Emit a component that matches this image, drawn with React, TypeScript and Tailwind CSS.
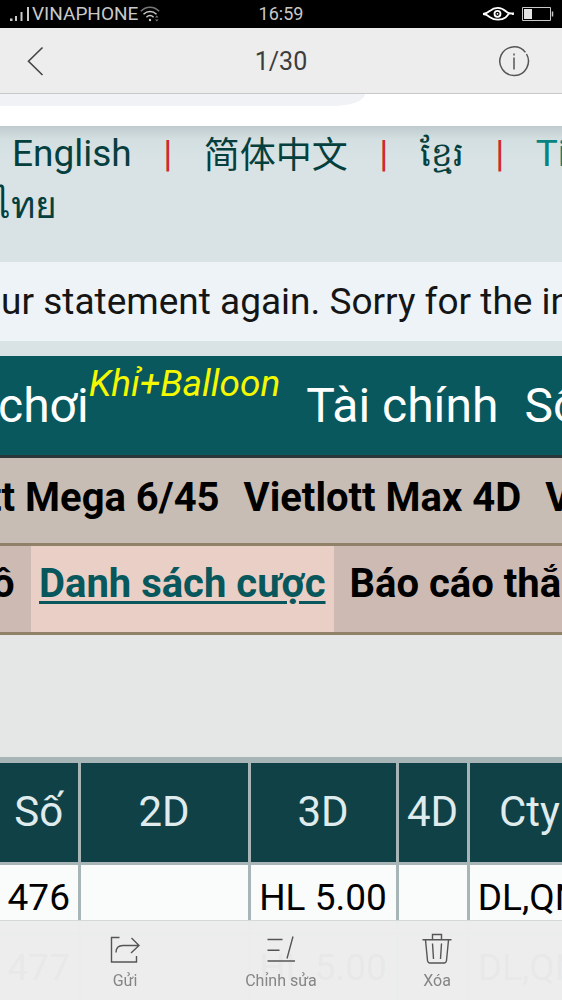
import type { ReactNode } from 'react'

const languages = [
  { label: 'English', className: 'text-[37px] text-[#053f3e]' },
  { label: '简体中文', className: 'pt-0.5 text-4xl leading-[52px] text-[#053f3e]' },
  { label: 'ខ្មែរ', className: 'text-[34px] text-[#053f3e]' },
  { label: 'Tiếng Việt', className: 'text-[37px] text-[#078380]' },
]

const columns = [
  { label: 'Số', width: 'w-[79px]' },
  { label: '2D', width: 'w-[170px]' },
  { label: '3D', width: 'w-[148px]' },
  { label: '4D', width: 'w-[71px]' },
  { label: 'Cty', width: 'w-[123px]' },
]

const rows = [
  ['476', '', 'HL 5.00', '', 'DL,QN'],
  ['477', '', 'HL 5.00', '', 'DL,QN'],
]

const StatusBar = () => (
  <div className="grid h-7 shrink-0 grid-cols-3 items-center bg-black px-2 text-lg leading-7 text-[#c9c9c9]">
    <div className="flex items-center">
      <svg width="22" height="16" viewBox="0 0 22 16" fill="#c9c9c9" aria-hidden="true">
        <path d="M2 12.500h2.500V15H2zM7 10h2v5H7zM12.500 6h2v9h-2zM19 1h2v14h-2z" />
      </svg>
      <span className="ml-0.5 text-[19px]">VINAPHONE</span>
      <svg className="ml-0.5" width="20" height="16" viewBox="0 0 20 16" fill="none" stroke="#c9c9c9" strokeWidth="1.500" aria-hidden="true">
        <path d="M.8 5.200C6-.2 14-.2 19.200 5.200" stroke="#777" />
        <path d="M3.500 8.200c3.800-3.600 9.200-3.600 13 0M6.400 11.200c2.200-2 5-2 7.200 0" />
        <circle cx="10" cy="14" r="1.200" fill="#c9c9c9" stroke="none" />
        <path d="M15 11.500l1.800-2 1.800 2zM15 13.500l1.800 2 1.800-2z" fill="#777" stroke="none" />
      </svg>
    </div>
    <span className="text-center">16:59</span>
    <div className="flex items-center justify-end gap-2">
      <svg width="32" height="16" viewBox="0 0 32 16" fill="none" stroke="#fff" aria-hidden="true">
        <path d="M1 8C4 7.800 6 6.500 8 4.800 12.500.8 19 .8 23.500 5 25.500 7 28 8 31 7.300v1.600" strokeWidth="1.800" />
        <path d="M1 8c3 .2 5 1.500 7 3.200 4.500 3.200 11.500 3.200 15.500.3 1.600-1.400 2.500-2.600 3.500-4" strokeWidth="1.800" />
        <circle cx="15.500" cy="7.800" r="3" strokeWidth="1.800" />
        <circle cx="15.500" cy="7.800" r=".9" fill="#fff" stroke="none" />
      </svg>
      <svg width="32" height="14" viewBox="0 0 32 14" fill="none" aria-hidden="true">
        <path d="M.5.500h28v13H.5z" stroke="#c9c9c9" />
        <path d="M2 2h8v10H2z" fill="#e5e5e5" />
        <path d="M30.500 4.500v5" stroke="#c9c9c9" strokeWidth="1.500" />
      </svg>
    </div>
  </div>
)

const PhotoHeader = () => (
  <header className="grid h-[66px] shrink-0 grid-cols-3 items-center border-b border-[#c8c8c8] bg-[#ededed] px-6 text-[#3c3c3c]">
    <button type="button" aria-label="Quay lại" className="justify-self-start">
      <svg width="24" height="32" viewBox="0 0 24 32" fill="none" stroke="#444" strokeWidth="1.600">
        <path d="M18.500 2.500L4.500 16.300l14 13.700" />
      </svg>
    </button>
    <h1 className="pt-0.5 text-center text-[25px] leading-8">1/30</h1>
    <button type="button" aria-label="Thông tin" className="mr-2 justify-self-end">
      <svg width="32" height="32" viewBox="0 0 32 32" fill="none" stroke="#555" strokeWidth="1.500">
        <path d="M27.420 7.390A14.300 14.300 0 1 0 28.500 9" />
        <path d="M16 12.500v12M16 8.500v2" />
      </svg>
    </button>
  </header>
)

const LanguageBar = () => (
  <nav className="h-[136px] shrink-0 bg-[#d9e3e5] bg-linear-to-b from-[#bfcbce] via-[#d3dfe1] via-10% to-[#d9e3e5] to-25% pt-0.5 text-[37px] leading-[52px]">
    <div className="flex h-[52px] pl-3">
      {languages.map((item, index) => (
        <div key={item.label} className="flex shrink-0">
          {index > 0 && <span className="w-[72px] text-center text-[#cf2a2c]">|</span>}
          <a href="#" className={item.className}>
            {item.label}
          </a>
        </div>
      ))}
    </div>
    <a href="#" className="-ml-2 block text-[#053f3e]">ไทย</a>
  </nav>
)

const MenuLink = ({ children }: { children: ReactNode }) => (
  <a href="#" className="shrink-0 text-black">
    {children}
  </a>
)

const Menus = () => (
  <div className="shrink-0">
    <nav className="flex h-[102px] items-center border-b-3 border-[#29373a] bg-[#09585e] text-5xl leading-none text-white">
      <a href="#" className="-ml-0.5 shrink-0">
        chơi
      </a>
      <a href="#" className="mb-11 shrink-0 text-[37px] text-[#f4f900] italic">
        Khỉ+Balloon
      </a>
      <a href="#" className="ml-[26px] shrink-0">
        Tài chính
      </a>
      <a href="#" className="ml-[26px] shrink-0">
        Sổ
      </a>
    </nav>
    <nav className="flex h-[88px] items-center gap-6 border-b-3 border-[#918168] bg-[#c8bdb4] pb-1.5 text-[40px] leading-none font-bold">
      <div className="-ml-3 shrink-0">
        <MenuLink>tt Mega 6/45</MenuLink>
      </div>
      <MenuLink>Vietlott Max 4D</MenuLink>
      <MenuLink>Vietlott</MenuLink>
    </nav>
    <nav className="flex h-[89px] border-b-3 border-[#918168] bg-[#cdbab2] text-[40px] leading-[76px] font-bold">
      <div className="-ml-2 w-[39px] shrink-0">
        <MenuLink>ô</MenuLink>
      </div>
      <a href="#" className="shrink-0 bg-[#e9cfc5] px-2 text-[#07575c] underline decoration-3 underline-offset-4">
        Danh sách cược
      </a>
      <div className="ml-4 shrink-0">
        <MenuLink>Báo cáo thắng thua</MenuLink>
      </div>
    </nav>
  </div>
)

const BetTable = () => (
  <table className="w-max shrink-0 table-fixed border-collapse border-t-6 border-[#a8b5b6]">
    <thead>
      <tr className="h-[103px] bg-[#104147] text-[42px] text-[#dfebed]">
        {columns.map((column) => (
          <th
            key={column.label}
            scope="col"
            className={`${column.width} border-r-3 border-b-3 border-[#a8b5b6] p-0 pb-0.5 text-center font-normal`}
          >
            {column.label}
          </th>
        ))}
      </tr>
    </thead>
    <tbody>
      {rows.map((row) => (
        <tr key={row[0]} className="h-[70px] bg-[#fafcfb] text-[37px] text-black">
          {row.map((cell, index) => (
            <td key={index} className="border-r-3 border-b-3 border-[#a8b5b6] p-0 text-center">
              {cell}
            </td>
          ))}
        </tr>
      ))}
    </tbody>
  </table>
)

const actions = [
  {
    label: 'Gửi',
    icon: (
      <path d="M10.500 4.500H2.500v24.500h25v-6M7 19.500c0-4.500 2.500-7 7-7h15.500M22.500 5l7.500 7.500-8 7.500" />
    ),
  },
  {
    label: 'Chỉnh sửa',
    icon: <path d="M2.500 6.500h15M2.500 17.300h12M2.500 28h27.500M28 3.500l-6 22" />,
  },
  {
    label: 'Xóa',
    icon: (
      <path d="M1.500 6.700h29M11.500 6.500V1.500h9v5M4.500 7l2 20.500c.2 1.800.8 2.500 2.500 2.500h14c1.700 0 2.300-.7 2.500-2.500l2-20.500M11.500 10.500l1 15.500M20.500 10.500l-1 15.500" />
    ),
  },
]

const ActionBar = () => (
  <footer className="fixed inset-x-0 bottom-0 flex h-20 justify-center gap-10 border-t border-[#d5d8d8] bg-[#ededed]/98 text-[#858585]">
    {actions.map((action) => (
      <button
        key={action.label}
        type="button"
        className="flex w-[116px] flex-col items-center pt-3"
      >
        <svg width="32" height="34" viewBox="0 0 32 34" fill="none" stroke="#555" strokeWidth="1.400" aria-hidden="true">
          {action.icon}
        </svg>
        <span className="mt-0.5 text-base leading-6 whitespace-nowrap">{action.label}</span>
      </button>
    ))}
  </footer>
)

const App = () => {
  return (
    <div className="flex h-screen flex-col overflow-hidden bg-[#e5e7e6] font-[Roboto,'Noto_Sans_CJK_SC','Noto_Sans',sans-serif] whitespace-nowrap">
      <StatusBar />
      <PhotoHeader />
      <main className="flex min-h-0 flex-1 flex-col overflow-hidden">
        <div className="h-8 shrink-0 bg-white">
          <div className="h-3 w-[65%] rounded-br-[32px_12px] bg-[#f0f2f5]" />
        </div>
        <LanguageBar />
        <div className="shrink-0 bg-[#d9e3e5] pb-[15px]">
          <p className="-ml-5 bg-[#edf3f6] text-[37px] leading-[79px] text-[#151515]">
            our statement again. Sorry for the inconvenience.
          </p>
        </div>
        <Menus />
        <div className="h-[122px] shrink-0" />
        <BetTable />
      </main>
      <ActionBar />
    </div>
  )
}

export default App
